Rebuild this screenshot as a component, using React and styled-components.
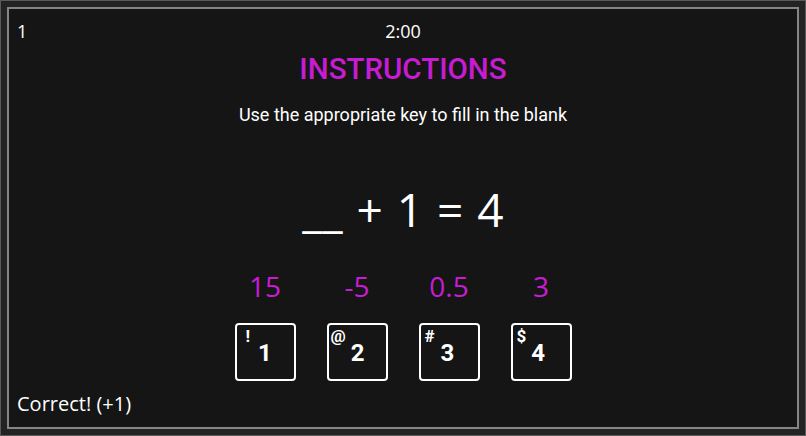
import React from "react";
import styled, { createGlobalStyle } from "styled-components";

const Global = createGlobalStyle`
  html, body { margin: 0; padding: 0; background: #1e1e1e; }
  body { width: 806px; height: 436px; overflow: hidden; }
  #root { width: 806px; height: 436px; }
`;

const Frame = styled.div`
  box-sizing: border-box;
  width: 806px;
  height: 436px;
  border: 1px solid #5a5a5a;
  padding: 6px;
  background: #232323;
  display: flex;
`;

const Screen = styled.div`
  box-sizing: border-box;
  flex: 1;
  border: 2px solid #858585;
  background: #151515;
  color: #ffffff;
  display: flex;
  flex-direction: column;
  align-items: center;
  padding: 10px 8px 11px 8px;
  font-family: "Open Sans", "Noto Sans", sans-serif;
`;

const TopBar = styled.div`
  align-self: stretch;
  display: grid;
  grid-template-columns: 1fr auto 1fr;
  font-size: 18px;
  line-height: 24px;
`;

const Title = styled.h1`
  margin: 9px 0 0;
  font-family: Roboto, sans-serif;
  font-weight: 500;
  font-size: 29.5px;
  line-height: 34px;
  color: #c81cd2;
`;

const Instruction = styled.p`
  margin: 18px 0 0;
  font-family: Roboto, sans-serif;
  font-size: 18px;
  line-height: 22px;
`;

const Equation = styled.div`
  margin-top: 52px;
  font-size: 46px;
  line-height: 62px;
  word-spacing: 2px;
`;

const Row = styled.div`
  display: grid;
  grid-template-columns: repeat(4, 61px);
  column-gap: 31px;
  justify-items: center;
`;

const Answers = styled(Row)`
  margin-top: 27px;
  font-size: 28px;
  line-height: 38px;
  color: #c81cd2;
`;

const Keys = styled(Row)`
  margin-top: 18px;
`;

const Key = styled.div`
  box-sizing: border-box;
  width: 61px;
  height: 58px;
  border: 2px solid #ffffff;
  border-radius: 4px;
  display: flex;
  align-items: flex-start;
  padding: 2px 0 0 ${(p) => p.$pad}px;
  font-family: Roboto, sans-serif;
  font-weight: 700;
`;

const Shift = styled.span`
  font-size: 17px;
  line-height: 18px;
`;

const Digit = styled.span`
  margin-top: 14px;
  margin-left: ${(p) => p.$gap}px;
  font-size: 24px;
  line-height: 24px;
`;

const Feedback = styled.div`
  align-self: stretch;
  margin-top: auto;
  font-size: 20px;
  line-height: 24px;
`;

const keys = [
  { s: "!", d: "1", pad: 9, gap: 8 },
  { s: "@", d: "2", pad: 2, gap: 5 },
  { s: "#", d: "3", pad: 4, gap: 6 },
  { s: "$", d: "4", pad: 4, gap: 5 },
];

export default function App() {
  return (
    <>
      <Global />
      <Frame>
        <Screen>
          <TopBar>
            <span>1</span>
            <span>2:00</span>
            <span />
          </TopBar>
          <Title>INSTRUCTIONS</Title>
          <Instruction>Use the appropriate key to fill in the blank</Instruction>
          <Equation>__ + 1 = 4</Equation>
          <Answers>
            <span>15</span>
            <span>-5</span>
            <span>0.5</span>
            <span>3</span>
          </Answers>
          <Keys>
            {keys.map((k) => (
              <Key key={k.d} $pad={k.pad}>
                <Shift>{k.s}</Shift>
                <Digit $gap={k.gap}>{k.d}</Digit>
              </Key>
            ))}
          </Keys>
          <Feedback>Correct! (+1)</Feedback>
        </Screen>
      </Frame>
    </>
  );
}
